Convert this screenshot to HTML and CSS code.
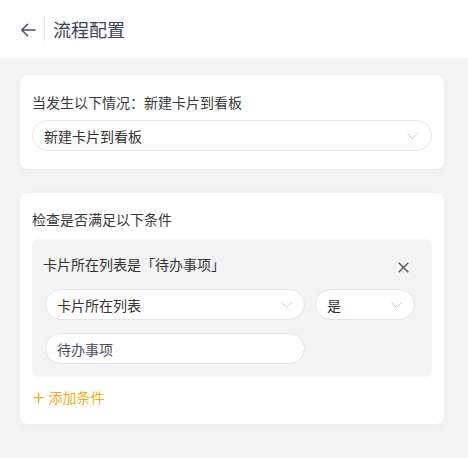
FILE: index.html
```html
<!DOCTYPE html>
<html lang="zh">
<head>
<meta charset="utf-8">
<link rel="stylesheet" href="styles.css">
</head>
<body>
<header class="header">
  <span class="back">
    <svg width="16" height="14" viewBox="0 0 16 14"><path d="M15 7H1.8M7.5 1.3L1.8 7l5.7 5.7" fill="none" stroke="#4a5068" stroke-width="1.6" stroke-linecap="round" stroke-linejoin="round"/></svg>
  </span>
  <span class="divider"></span>
  <h1 class="title">流程配置</h1>
</header>
<main class="content">
  <section class="card">
    <div class="label">当发生以下情况：新建卡片到看板</div>
    <div class="select full">
      <span>新建卡片到看板</span>
      <svg class="chev" width="11" height="6" viewBox="0 0 11 6"><path d="M0.5 0.5l5 5 5-5" fill="none" stroke="#c9cbd1" stroke-width="1"/></svg>
    </div>
  </section>
  <section class="card card2">
    <div class="label">检查是否满足以下条件</div>
    <div class="cond">
      <div class="cond-head">
        <span class="cond-title">卡片所在列表是「待办事项」</span>
        <span class="close">
          <svg width="11" height="11" viewBox="0 0 11 11"><path d="M0.7 0.7l9.6 9.6M10.3 0.7L0.7 10.3" stroke="#555a63" stroke-width="1.4"/></svg>
        </span>
      </div>
      <div class="row">
        <div class="select field">
          <span>卡片所在列表</span>
          <svg class="chev" width="11" height="6" viewBox="0 0 11 6"><path d="M0.5 0.5l5 5 5-5" fill="none" stroke="#c9cbd1" stroke-width="1"/></svg>
        </div>
        <div class="select op">
          <span>是</span>
          <svg class="chev" width="11" height="6" viewBox="0 0 11 6"><path d="M0.5 0.5l5 5 5-5" fill="none" stroke="#c9cbd1" stroke-width="1"/></svg>
        </div>
      </div>
      <div class="select field value"><span>待办事项</span></div>
    </div>
    <div class="add"><span class="plus">+</span> 添加条件</div>
  </section>
</main>
</body>
</html>
```
FILE: styles.css
```css
* { box-sizing: border-box; }
html, body { margin: 0; padding: 0; }
body {
  background: #f4f4f4;
  font-family: "Noto Sans CJK SC", "Noto Sans", sans-serif;
  color: #333;
  width: 468px;
  height: 458px;
  overflow: hidden;
}
.header {
  height: 58px;
  background: #fff;
  display: flex;
  align-items: center;
  padding-left: 20px;
}
.back { display: flex; width: 16px; height: 14px; margin-top: 1px; }
.divider {
  width: 1px;
  height: 24px;
  background: #e6e6e9;
  margin-left: 8px;
  margin-right: 8px;
}
.title {
  margin: 0;
  font-size: 18px;
  font-weight: 400;
  color: #3d4257;
  line-height: 24px;
}
.content {
  padding: 17px 24px 0 20px;
  display: flex;
  flex-direction: column;
  gap: 24px;
}
.card {
  background: #fff;
  border-radius: 8px;
  padding: 18px 12px 18px;
  box-shadow: 0 2px 8px rgba(0,0,0,0.04);
}
.label {
  font-size: 14px;
  line-height: 18px;
  color: #3a3a3a;
}
.select {
  display: flex;
  align-items: center;
  justify-content: space-between;
  height: 31px;
  border: 1px solid #e4e5ea;
  border-radius: 16px;
  background: #fff;
  font-size: 14px;
  color: #333;
  padding: 0 12px 0 11px;
}
.select.full { margin-top: 9px; }
.select.full .chev { margin-right: 1px; }
.card2 { padding-top: 17px; padding-bottom: 17px; }
.card2 .label { margin-bottom: 11px; }
.cond {
  background: #f4f4f5;
  border-radius: 8px;
  padding: 16px 17px 13px 13px;
}
.cond-head {
  display: flex;
  justify-content: space-between;
  align-items: flex-start;
  height: 24px;
}
.cond-title {
  font-size: 14px;
  line-height: 18px;
  color: #333;
  margin-left: -2px;
}
.close {
  width: 24px;
  height: 24px;
  display: flex;
  align-items: center;
  justify-content: center;
}
.row {
  display: flex;
  gap: 10px;
  margin-top: 10px;
}
.field { width: 260px; }
.op { width: 100px; }
.value { margin-top: 13px; color: #4a4f63; }
.add {
  margin-top: 11px;
  font-size: 14px;
  line-height: 18px;
  color: #f5ad14;
}
.plus { font-size: 16px; font-family: "DejaVu Sans", sans-serif; }
```
